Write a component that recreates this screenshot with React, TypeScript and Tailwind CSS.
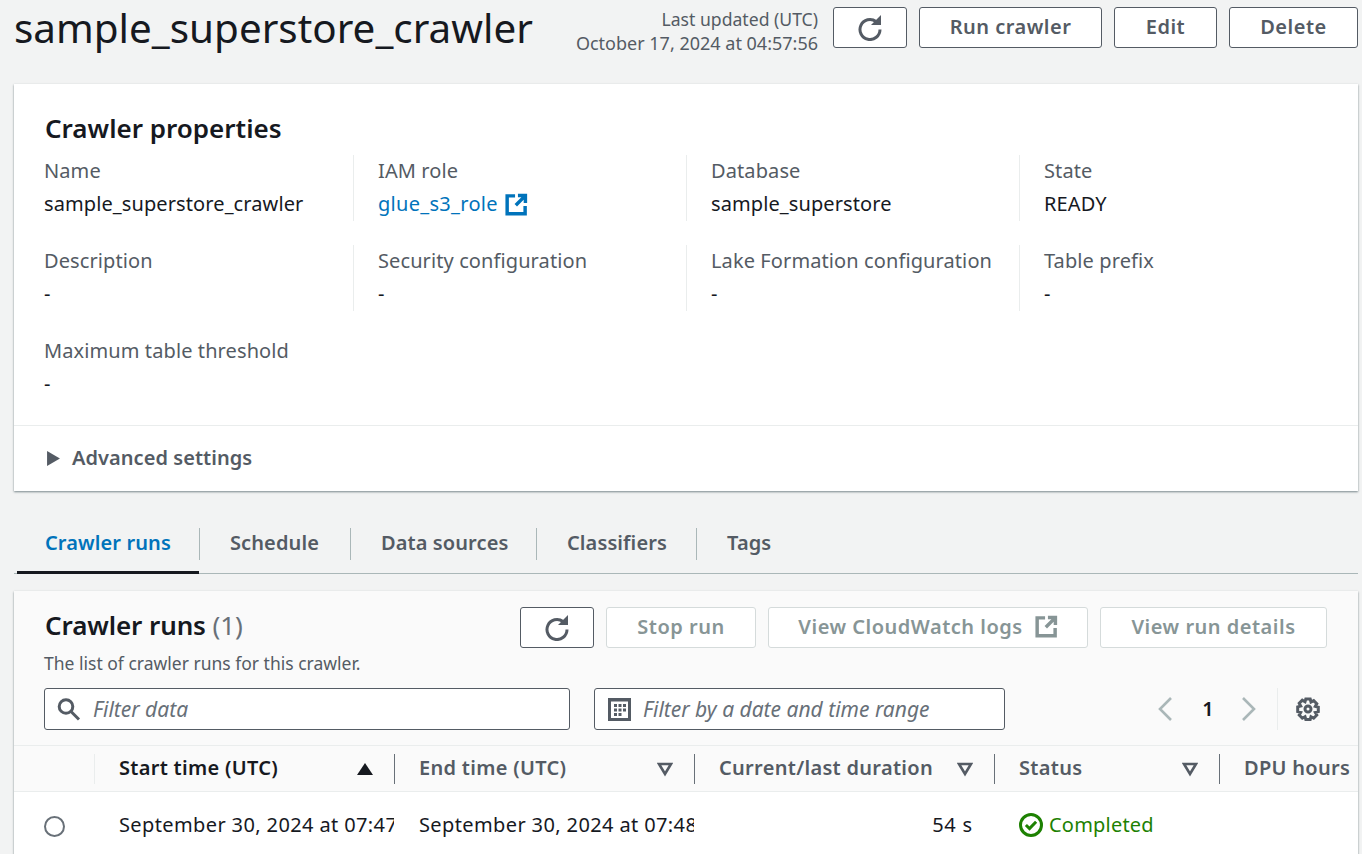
import type { ReactNode } from 'react';

function Refresh() {
  return (
    <svg viewBox="0 0 24 26" className="w-[24px] h-[26px] mt-[2px] fill-none stroke-current stroke-[3]">
      <path d="M22 14.5A10 10 0 1 1 18 6.5" />
      <path d="M23 0V10H13z" className="fill-current stroke-none" />
    </svg>
  );
}

function External({ className }: { className: string }) {
  return (
    <svg viewBox="0 0 16 16" className={`w-[23px] h-[23px] fill-none stroke-current stroke-[2.4] ${className}`}>
      <path d="M14 9v5.5H1.5V2H7" />
      <path d="M9 1.8h5.2V7M14 2 7.5 8.5" />
    </svg>
  );
}

function SortDown() {
  return (
    <svg viewBox="0 0 16 16" className="w-[16px] h-[16px] fill-none stroke-[#545b64] stroke-[2.6]">
      <path d="M2 3h12L8 13z" />
    </svg>
  );
}

function Button({ w, disabled, children }: { w: string; disabled?: boolean; children: ReactNode }) {
  return (
    <div
      className={`${w} h-[41px] pb-[2px] flex items-center justify-center gap-3 rounded-[3px] border bg-white text-[20px] font-semibold tracking-[0.5px] ${
        disabled ? 'border-[#d5dbdb] text-[#879596]' : 'border-[#545b64] text-[#545b64]'
      }`}
    >
      {children}
    </div>
  );
}

function Field({ label, value, link, first }: { label: string; value: string; link?: boolean; first?: boolean }) {
  return (
    <div className={`h-[66px] tracking-[0.1px] ${first ? '' : 'border-l border-[#eaeded] pl-[24px]'}`}>
      <div className="text-[20px] leading-[32px] text-[#545b64]">{label}</div>
      <div className={`flex items-center gap-[7px] text-[20px] leading-[34px] ${link ? 'text-[#0073bb] tracking-[0.3px]' : 'text-[#16191f]'}`}>
        {value}
        {link && <External className="text-[#0073bb]" />}
      </div>
    </div>
  );
}

function Head({ w, label, active, last }: { w: string; label: string; active?: boolean; last?: boolean }) {
  return (
    <div className={`${w} h-[30px] pl-[24px] pr-[21px] flex items-center justify-between ${last ? '' : 'border-r border-[#687078]'}`}>
      <span className={`text-[20px] font-semibold whitespace-nowrap tracking-[0.3px] pb-[2px] ${active ? 'text-[#16191f]' : 'text-[#545b64]'}`}>{label}</span>
      {last ? null : active ? (
        <svg viewBox="0 0 16 16" className="w-[16px] h-[16px] fill-[#16191f]">
          <path d="M0 14 8 2l8 12z" />
        </svg>
      ) : (
        <SortDown />
      )}
    </div>
  );
}

const tabs = [
  { label: 'Schedule', w: 'w-[151px]' },
  { label: 'Data sources', w: 'w-[186px]' },
  { label: 'Classifiers', w: 'w-[160px]' },
  { label: 'Tags', w: 'w-[106px]' },
];

export default function App() {
  return (
    <div className="w-[1362px] h-[854px] overflow-hidden bg-[#f2f3f3] font-['Noto_Sans',sans-serif]">
      <header className="h-[84px] flex justify-between pl-[14px] pr-[4px]">
        <h1 className="text-[40.4px] leading-[56px] text-[#16191f]">sample_superstore_crawler</h1>
        <div className="flex items-start gap-[12px] pt-[7px]">
          <div className="text-right text-[18px] leading-[24px] text-[#545b64] mr-[3px]">
            <div className="text-[17.6px]">Last updated (UTC)</div>
            <div>October 17, 2024 at 04:57:56</div>
          </div>
          <Button w="w-[74px]">
            <Refresh />
          </Button>
          <Button w="w-[183px]">Run crawler</Button>
          <Button w="w-[103px]">Edit</Button>
          <Button w="w-[129px]">Delete</Button>
        </div>
      </header>

      <section className="ml-[14px] mr-[4px] h-[407px] bg-white shadow-[0_1px_2px_rgba(0,28,36,0.5)]">
        <div className="h-[342px] pl-[30px] pt-[26px] border-b border-[#eaeded]">
          <h2 className="ml-[1px] text-[26px] leading-[36px] font-semibold text-[#16191f]">Crawler properties</h2>
          <div className="mt-[9px] grid grid-cols-[309px_333px_333px_1fr] gap-y-[24px]">
            <Field first label="Name" value="sample_superstore_crawler" />
            <Field label="IAM role" value="glue_s3_role" link />
            <Field label="Database" value="sample_superstore" />
            <Field label="State" value="READY" />
            <Field first label="Description" value="-" />
            <Field label="Security configuration" value="-" />
            <Field label="Lake Formation configuration" value="-" />
            <Field label="Table prefix" value="-" />
            <Field first label="Maximum table threshold" value="-" />
          </div>
        </div>
        <div className="h-[64px] pl-[33px] flex items-center gap-[12px] text-[20px] font-semibold text-[#545b64] tracking-[0.05px]">
          <svg viewBox="0 0 12 14" className="w-[13px] h-[15px] fill-[#545b64]">
            <path d="M0 0 12 7 0 14z" />
          </svg>
          Advanced settings
        </div>
      </section>

      <nav className="mt-[29px] ml-[14px] mr-[4px] h-[54px] flex items-start border-b border-[#aab7b8] tracking-[0.1px]">
        <div className="relative h-[53px] w-[185px] pl-[31px] pt-[8px]">
          <div className="h-[30px] flex items-center">
            <span className="text-[20px] font-semibold text-[#0073bb]">Crawler runs</span>
          </div>
          <div className="absolute left-[3px] right-0 bottom-[-1px] h-[3px] bg-[#16191f]" />
        </div>
        {tabs.map((t) => (
          <div key={t.label} className={`${t.w} mt-[8px] h-[32px] pl-[30px] pb-[2px] flex items-center border-l border-[#aab7b8] text-[20px] font-semibold text-[#545b64]`}>
            {t.label}
          </div>
        ))}
      </nav>

      <section className="mt-[17px] ml-[14px] mr-[4px] bg-[#fafafa] shadow-[0_1px_2px_rgba(0,28,36,0.5)]">
        <div className="h-[154px] pl-[30px] pr-[31px] pt-[16px]">
          <div className="flex justify-between">
            <div>
              <h2 className="ml-[1px] -mt-[1px] text-[26px] leading-[38px] font-semibold text-[#16191f] tracking-[-0.1px]">
                Crawler runs <span className="font-normal text-[#687078]">(1)</span>
              </h2>
              <p className="text-[17.5px] leading-[26px] text-[#545b64] mt-[6px]">The list of crawler runs for this crawler.</p>
            </div>
            <div className="flex gap-[12px]">
              <Button w="w-[74px]">
                <Refresh />
              </Button>
              <Button disabled w="w-[150px]">Stop run</Button>
              <Button disabled w="w-[320px]">
                View CloudWatch logs
                <External className="text-[#879596]" />
              </Button>
              <Button disabled w="w-[227px]">View run details</Button>
            </div>
          </div>
          <div className="mt-[12px] flex items-center">
            <div className="w-[526px] h-[42px] flex items-center gap-[12px] pl-[12px] rounded-[3px] border border-[#545b64] bg-white text-[21px] italic text-[#687078]">
              <svg viewBox="0 0 24 24" className="w-[24px] h-[24px] fill-none stroke-[#545b64] stroke-[3]">
                <circle cx="9" cy="9.5" r="6.8" />
                <path d="M14 14.5 22 22.5" />
              </svg>
              <span className="pt-[2px]">Filter data</span>
            </div>
            <div className="ml-[24px] w-[411px] h-[42px] flex items-center gap-[12px] pl-[13px] rounded-[3px] border border-[#545b64] bg-white text-[21px] italic text-[#687078]">
              <svg viewBox="0 0 23 23" className="w-[23px] h-[23px]">
                <path fill="#545b64" d="M0 0h23v23H0z" />
                <path fill="#fff" d="M3 3.5h17V20H3z" />
                <path fill="#545b64" d="M6 6h3v3H6zM10.5 6h3v3h-3zM15 6h3v3h-3zM6 10.5h3v3H6zM10.5 10.5h3v3h-3zM15 10.5h3v3h-3zM6 15h3v3H6zM10.5 15h3v3h-3z" />
              </svg>
              <span className="pt-[2px]">Filter by a date and time range</span>
            </div>
            <div className="ml-auto flex items-center h-[42px]">
              <svg viewBox="0 0 16 24" className="w-[16px] h-[24px] fill-none stroke-[#aab7b8] stroke-[2.6] -ml-[2px] mr-[2px]">
                <path d="M14 1 3 12l11 11" />
              </svg>
              <span className="w-[66px] text-center text-[20px] font-semibold text-[#16191f]">1</span>
              <svg viewBox="0 0 16 24" className="w-[16px] h-[24px] fill-none stroke-[#aab7b8] stroke-[2.6]">
                <path d="M2 1l11 11L2 23" />
              </svg>
              <div className="ml-[20px] h-[42px] border-l border-[#eaeded] pl-[18px] flex items-center">
                <svg viewBox="0 0 24 24" className="w-[24px] h-[24px] fill-none stroke-[#545b64] stroke-[3] mr-[7px]">
                  <circle cx="12" cy="12" r="3" />
                  <path d="M9.8 2h4.4l.8 3 2.7-1.4 3.1 3.1-1.5 2.7 3 .8v4.4l-3 .8 1.5 2.7-3.1 3.1-2.7-1.5-.8 2.8H9.8l-.8-2.8-2.7 1.5-3.1-3.1 1.5-2.7-3-.8V9.9l3-.8-1.5-2.8 3.1-3.1L9 4.7z" />
                </svg>
              </div>
            </div>
          </div>
        </div>

        <div className="h-[47px] flex items-center border-y border-[#eaeded]">
          <div className="w-[81px] h-[30px] border-r border-[#eaeded]" />
          <Head w="w-[300px]" label="Start time (UTC)" active />
          <Head w="w-[300px]" label="End time (UTC)" />
          <Head w="w-[300px]" label="Current/last duration" />
          <Head w="w-[225px]" label="Status" />
          <Head w="w-[138px]" label="DPU hours" last />
        </div>

        <div className="h-[70px] pb-[4px] bg-white flex items-center text-[20px] text-[#16191f]">
          <div className="w-[81px] pl-[30px] pt-[2px]">
            <div className="w-[21px] h-[21px] rounded-full border-2 border-[#687078]" />
          </div>
          <div className="w-[299px] mr-[1px] pl-[24px] overflow-hidden whitespace-nowrap tracking-[0.38px]">September 30, 2024 at 07:47:14</div>
          <div className="w-[299px] mr-[1px] pl-[24px] overflow-hidden whitespace-nowrap tracking-[0.38px]">September 30, 2024 at 07:48:08</div>
          <div className="w-[300px] pr-[22px] text-right tracking-[0.8px]">54 s</div>
          <div className="pl-[24px] flex items-center gap-[6px] text-[#1d8102] tracking-[0.2px]">
            <svg viewBox="0 0 16 16" className="w-[24px] h-[24px] fill-none stroke-current stroke-[2]">
              <circle cx="8" cy="8" r="7" />
              <path d="M4.6 8l2.4 2.4 4.4-4.6" />
            </svg>
            Completed
          </div>
        </div>
      </section>
    </div>
  );
}
